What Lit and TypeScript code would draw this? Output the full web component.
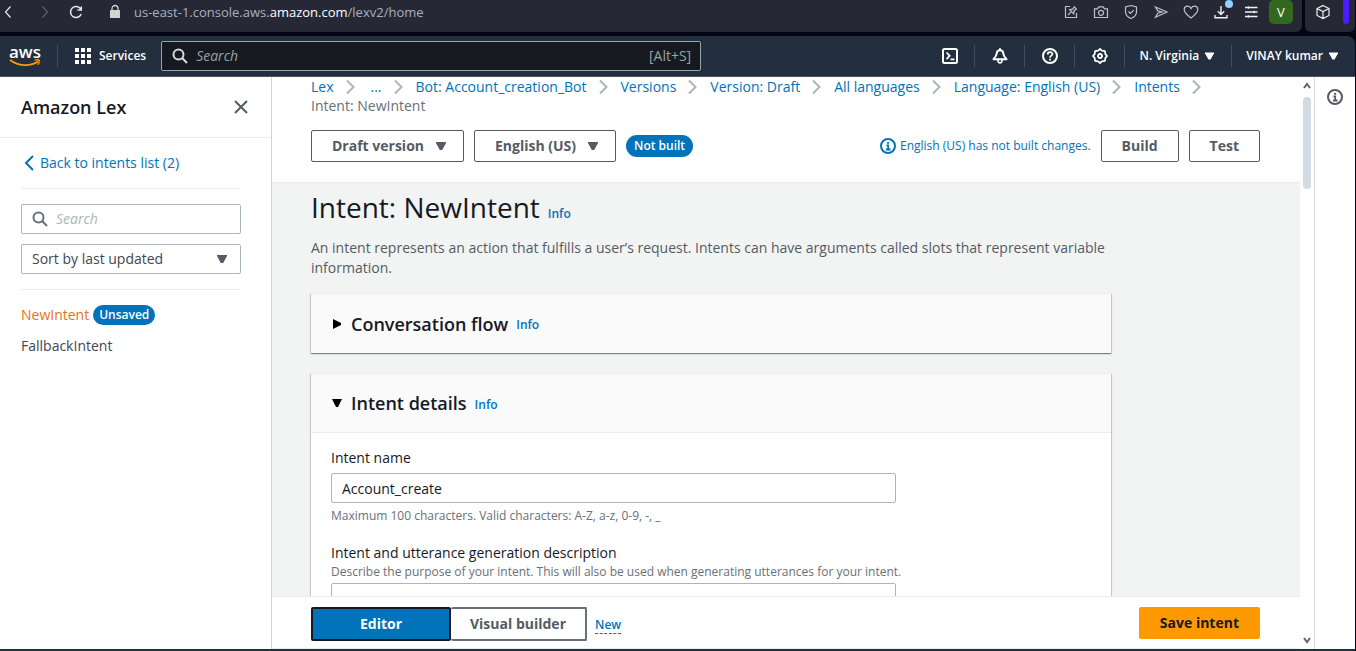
import { LitElement, html, css, svg } from "lit";
import { customElement, state } from "lit/decorators.js";

const infoIcon = svg`<svg viewBox="0 0 16 16" width="16" height="16" fill="none" stroke="currentColor" stroke-width="2" aria-hidden="true"><circle cx="8" cy="8" r="7"/><path d="M6 11.500h4.500M6.500 7.500H8.200V11.500M7 4.800h2.200" stroke-width="1.800"/></svg>`;
const chevron = svg`<svg viewBox="0 0 9 16" width="9" height="16" fill="none" stroke="#aab7b8" stroke-width="2" aria-hidden="true"><path d="M1 1.500 7.500 8 1 14.500"/></svg>`;
const searchIcon = svg`<svg viewBox="0 0 16 16" width="16" height="16" fill="none" stroke="currentColor" stroke-width="2" aria-hidden="true"><circle cx="6.500" cy="6.500" r="5"/><path d="m10.300 10.300 4.700 4.700"/></svg>`;
const caret = svg`<svg class="caret" viewBox="0 0 10 8" width="10" height="8" fill="currentColor" aria-hidden="true"><path d="M0 0h10v1L6.200 8H3.800L0 1z"/></svg>`;

@customElement("browser-bar")
class BrowserBar extends LitElement {
  static styles = css`
    :host { display: flex; height: 32px; gap: 3px; padding-right: 1px; background: #020512; font: 13px/24px "Open Sans", sans-serif; color: #e6e8ee; }
    .bar { flex: 1; display: flex; align-items: center; background: #262935; border-radius: 0 0 6px 0; padding-right: 9px; padding-bottom: 8px; }
    .side { display: flex; align-items: center; width: 50px; background: #262935; border-radius: 0 0 6px 6px; padding-bottom: 8px; box-sizing: border-box; }
    button { appearance: none; border: 0; background: none; padding: 0; color: inherit; font: inherit; display: grid; place-items: center; position: relative; }
    svg { display: block; fill: none; stroke: currentColor; }
    .nav { display: flex; gap: 18px; }
    .dim { color: #5b5f6b; }
    .lock { margin: 0 13px 0 25px; }
    .url { flex: 1; color: #a9b0c0; white-space: nowrap; }
    .url b { font-weight: 400; color: #fff; }
    .tools { display: flex; align-items: center; gap: 14px; color: #bfc1c7; }
    .bright { color: #f1f1f3; }
    .dot { position: absolute; top: -4px; right: -4px; width: 8px; height: 8px; border-radius: 50%; background: #8fd3ff; }
    .avatar { width: 24px; height: 24px; margin-left: -4px; border-radius: 5px; background: #33691e; color: #fff; font-size: 13px; }
    .cube { padding: 0 12px 0 10px; }
    .stripe { width: 6px; height: 24px; border-radius: 0 0 3px 3px; background: #4a1cff; }
  `;

  tool(label: string, body: unknown, cls = "", extra: unknown = "") {
    return html`<button class=${cls} aria-label=${label}><svg viewBox="0 0 16 16" width="16" height="16" stroke-width="1.2">${body}</svg>${extra}</button>`;
  }

  render() {
    return html`
      <div class="bar">
        <div class="nav">
          ${this.tool("Back", svg`<path d="M10.500 2.500 5.500 8l5 5.500"/>`)}
          ${this.tool("Forward", svg`<path d="m8.500 2.500 5 5.500-5 5.500"/>`, "dim")}
          ${this.tool("Reload", svg`<path d="M12.800 5.200A5.500 5.500 0 1 0 13.200 10M13.300 2.500V6H9.500" stroke-width="1.500"/>`)}
        </div>
        <svg class="lock" viewBox="0 0 12 16" width="12" height="16"><path d="M1.500 6h9Q11 6 11 6.500v7q0 .5-.5.5h-9q-.5 0-.5-.5v-7Q1 6 1.500 6z" fill="#d3d3d3" stroke="none"/><path d="M3 7V4.500a3 3 0 0 1 6 0V7" stroke="#d3d3d3" stroke-width="1.300"/></svg>
        <div class="url">us-east-1.console.aws.<b>amazon.com</b>/lexv2/home</div>
        <div class="tools">
          ${this.tool("Edit page", svg`<path d="M7 2.500H2.500v11h11V9M5 11 8.300 7.700M10.800 2.300l3 3M11.300 2.800 9.700 5.200 6.700 5.700l4 4 .5-3 2.300-1.600"/>`)}
          ${this.tool("Snapshot", svg`<path d="M1.500 4.800h3l1.300-2h4.400l1.300 2h3v8.700h-13z"/><circle cx="8" cy="8.800" r="2.500"/>`)}
          ${this.tool("Shield", svg`<path d="M8 1.500 13.500 3v5c0 3-2.500 5.300-5.500 6.500C5 13.300 2.500 11 2.500 8V3z"/><path d="m5.500 7.500 2 2 3.200-3.400"/>`)}
          ${this.tool("Send", svg`<path d="M2.500 3 14 8 2.500 13.200 4.800 9.200 9 8 4.800 6.900z"/>`)}
          ${this.tool("Favourite", svg`<path d="M8 14C4 11 1.200 8.500 1.200 5.500c0-4 5.300-4.500 6.800-1 1.500-3.500 6.800-3 6.800 1C14.800 8.500 12 11 8 14z"/>`)}
          ${this.tool("Downloads", svg`<path d="M8 2v8.500M4.800 7.300 8 10.500l3.200-3.200M2 11v2.700h12V11" stroke-width="1.400"/>`, "bright", html`<span class="dot"></span>`)}
          ${this.tool("Easy setup", svg`<path d="M2 3.500h12.500M2 8h12.500M2 12.500h12.500M5.500 2.300v2.400M11 6.800v2.400M5.500 11.300v2.400" stroke-width="1.300"/>`, "bright")}
          <button class="avatar" aria-label="Profile">V</button>
        </div>
      </div>
      <div class="side">
        <div class="cube bright">${this.tool("Extensions", svg`<path d="M8 1.500 14 4.500v7L8 14.500 2 11.500v-7zM2 4.500l6 3 6-3M8 7.500v7"/>`)}</div>
        <div class="stripe"></div>
      </div>`;
  }
}

@customElement("console-header")
class ConsoleHeader extends LitElement {
  static styles = css`
    :host { display: flex; align-items: center; height: 40px; background: #232f3e; border-bottom: 1px solid #4a5562; border-radius: 0 8px 0 0; color: #fff; font: 600 12px/20px "Open Sans", sans-serif; }
    button { appearance: none; border: 0; background: none; padding: 0; color: inherit; font: inherit; display: flex; align-items: center; white-space: nowrap; }
    .logo { display: flex; flex-direction: column; align-items: center; width: 32px; margin: 0 16px 0 9px; color: #fff; text-decoration: none; font-size: 17px; line-height: 14px; }
    .logo svg { display: block; }
    .rule { width: 1px; height: 22px; background: #414d5c; }
    .services { gap: 8px; margin: 0 15px 0 17px; }
    .search { display: flex; align-items: center; flex: 0 1 540px; height: 30px; box-sizing: border-box; border: 1px solid #95a5a6; border-radius: 2px; background: #16191f; padding: 0 9px 0 10px; gap: 8px; font-weight: 400; font-size: 14px; color: #d5dbdb; }
    .search input { flex: 1; min-width: 0; border: 0; background: none; outline: none; color: #fff; font: inherit; padding: 0; }
    .search input::placeholder { color: #95a5a6; font-style: italic; }
    .search kbd { font: inherit; color: #95a5a6; }
    .right { margin-left: auto; display: flex; align-items: center; }
    .icon { width: 49px; height: 30px; justify-content: center; }
    .menu { gap: 6px; padding: 0 17px 0 14px; }
    .menu svg { width: 9px; }
  `;

  render() {
    return html`
      <a class="logo" href="#" aria-label="AWS home">aws
        <svg viewBox="0 0 32 8" width="32" height="8" fill="none" stroke="#ff9900" stroke-width="1.800"><path d="M1 1c8 6 20 7 28 1.500"/><path d="M25.500 1.200c3-.8 5-.5 4.700.3.2 1-.2 2.800-1.500 4.300" stroke-width="1.300"/></svg>
      </a>
      <span class="rule"></span>
      <button class="services">
        <svg viewBox="0 0 16 16" width="16" height="16" fill="#fff"><path d="M0 0h4v4H0zM6 0h4v4H6zM12 0h4v4h-4zM0 6h4v4H0zM6 6h4v4H6zM12 6h4v4h-4zM0 12h4v4H0zM6 12h4v4H6zM12 12h4v4h-4z"/></svg>
        Services
      </button>
      <label class="search">${searchIcon}<input type="search" placeholder="Search" aria-label="Search services" /><kbd>[Alt+S]</kbd></label>
      <div class="right">
        <button class="icon" aria-label="CloudShell"><svg viewBox="0 0 16 16" width="16" height="16" fill="none" stroke="#fff" stroke-width="2"><rect x="1" y="1" width="14" height="14" rx="1.500"/><path d="m4.500 4.500 3.200 3.300-3.200 3.400M8.500 11.300h4" stroke-width="1.700"/></svg></button>
        <span class="rule"></span>
        <button class="icon" aria-label="Notifications"><svg viewBox="0 0 16 16" width="16" height="16" fill="none" stroke="#fff" stroke-width="2" stroke-linejoin="round"><path d="M8 2.200C6 2.200 4.900 3.500 4.700 5.500 4.500 8 3.500 9 1.500 11.200h13C12.500 9 11.500 8 11.300 5.500 11.100 3.500 10 2.200 8 2.200zM8 .300v2"/><path d="M6 12c0 4 4 4 4 0" stroke-width="1.600"/></svg></button>
        <span class="rule"></span>
        <button class="icon" aria-label="Help"><svg viewBox="0 0 16 16" width="16" height="16" fill="none" stroke="#fff" stroke-width="2"><circle cx="8" cy="8" r="7"/><path d="M5.700 6.500C5.700 3.300 10.400 3.500 10.400 6 10.400 7.800 8 7.600 8 9.700M8 10.800v1.800" stroke-width="1.700"/></svg></button>
        <span class="rule"></span>
        <button class="icon" aria-label="Settings"><svg viewBox="0 0 16 16" width="16" height="16" fill="none" stroke="#fff" stroke-width="1.800" stroke-linejoin="round"><path d="M8 1 9.900 2.600 12.900 3.100 13.400 6.100 15 8 13.400 9.900 12.900 12.900 9.900 13.400 8 15 6.100 13.400 3.100 12.900 2.600 9.900 1 8 2.600 6.100 3.100 3.100 6.100 2.600z"/><circle cx="8" cy="8" r="2"/></svg></button>
        <span class="rule"></span>
        <button class="menu">N. Virginia ${caret}</button>
        <span class="rule"></span>
        <button class="menu">VINAY kumar ${caret}</button>
      </div>`;
  }
}

@customElement("intent-nav")
class IntentNav extends LitElement {
  static styles = css`
    :host { display: block; flex: none; width: 271px; background: #fff; border-right: 1px solid #cfd5d6; font: 14px/20px "Open Sans", sans-serif; color: #414750; }
    header { display: flex; align-items: center; justify-content: space-between; height: 60px; padding: 0 23px 0 21px; border-bottom: 1px solid #eaeded; }
    h2 { margin: 0; font-size: 18px; line-height: 22px; font-weight: 600; color: #16191f; }
    .close { appearance: none; border: 0; background: none; padding: 0; color: #545b64; display: grid; }
    .body { padding: 15px 30px 0 21px; }
    .back { display: flex; align-items: center; gap: 6px; padding-left: 3px; color: #0073bb; text-decoration: none; }
    hr { border: 0; border-top: 1px solid #eaeded; margin: 15px 0; }
    .field { display: flex; align-items: center; gap: 8px; height: 30px; box-sizing: border-box; border: 1px solid #aab7b8; border-radius: 2px; padding: 0 10px; color: #687078; }
    .field input { flex: 1; min-width: 0; border: 0; outline: none; padding: 0; background: none; font: inherit; color: #16191f; }
    .field input::placeholder { color: #aab7b8; font-style: italic; }
    .field select { flex: 1; appearance: none; border: 0; outline: none; padding: 0; background: none; font: inherit; color: #414750; }
    .sort { margin-top: 10px; padding-right: 13px; color: #545b64; }
    ul { list-style: none; margin: 0; padding: 0; display: grid; gap: 11px; }
    li { display: flex; align-items: center; gap: 4px; }
    li a { color: inherit; text-decoration: none; }
    li a.current { color: #ec7211; }
    .badge { background: #0073bb; color: #fff; border-radius: 10px; font-size: 12px; font-weight: 600; padding: 0 6px; }
  `;

  render() {
    return html`
      <header>
        <h2>Amazon Lex</h2>
        <button class="close" aria-label="Close navigation"><svg viewBox="0 0 14 14" width="14" height="14" fill="none" stroke="currentColor" stroke-width="2"><path d="m1 1 12 12M13 1 1 13"/></svg></button>
      </header>
      <div class="body">
        <a class="back" href="#"><svg viewBox="0 0 10 16" width="10" height="16" fill="none" stroke="currentColor" stroke-width="2"><path d="M9 1 2 8l7 7"/></svg>Back to intents list (2)</a>
        <hr />
        <label class="field">${searchIcon}<input type="search" placeholder="Search" aria-label="Search intents" /></label>
        <label class="field sort"><select aria-label="Sort intents"><option>Sort by last updated</option></select>${caret}</label>
        <hr />
        <ul>
          <li><a class="current" href="#">NewIntent</a><span class="badge">Unsaved</span></li>
          <li><a href="#">FallbackIntent</a></li>
        </ul>
      </div>`;
  }
}

@customElement("intent-editor")
class IntentEditor extends LitElement {
  @state() private view = "editor";

  static styles = css`
    :host { display: flex; flex-direction: column; flex: 1; min-width: 0; background: #fff; font: 14px/20px "Open Sans", sans-serif; color: #16191f; }
    a { color: #0073bb; text-decoration: none; }
    .scroll { flex: 1; min-height: 0; overflow: hidden; background: #f2f3f3; }
    .top { background: #fff; padding: 0 40px 20px 39px; border-bottom: 1px solid #eaeded; }
    .crumbs { display: flex; flex-wrap: wrap; margin: 0; padding: 0; list-style: none; color: #687078; line-height: 19px; }
    .crumbs li { display: flex; align-items: center; gap: 12px; padding-right: 13px; }
    .crumbs .more { padding-left: 3px; }
    .actions { display: flex; align-items: center; gap: 10px; margin-top: 15px; }
    .btn, .pick select { appearance: none; box-sizing: border-box; height: 32px; border: 1px solid #545b64; border-radius: 2px; background: #fff; color: #545b64; font: 700 14px/20px "Open Sans", sans-serif; padding: 0 20px; }
    .pick { display: grid; align-items: center; color: #545b64; }
    .pick > * { grid-area: 1 / 1; }
    .pick select { padding-right: 38px; }
    .pick svg { justify-self: end; margin-right: 18px; pointer-events: none; }
    .badge { background: #0073bb; color: #fff; border-radius: 11px; font-size: 12px; font-weight: 600; line-height: 22px; padding: 0 8px; }
    .note { display: flex; align-items: center; gap: 4px; margin-left: auto; color: #0073bb; font-size: 12px; }
    .page { padding: 4px 40px 20px 39px; }
    .column { max-width: 800px; }
    h1 { margin: 0; font-size: 28px; line-height: 40px; font-weight: 400; }
    .info { font-size: 12px; line-height: 16px; font-weight: 600; margin-left: 8px; }
    .lead { margin: 11px 0 15px; color: #545b64; }
    .card { background: #fff; border-top: 1px solid #eaeded; margin-bottom: 20px; box-shadow: 0 1px 1px 0 rgba(0, 28, 36, 0.3), 1px 1px 1px 0 rgba(0, 28, 36, 0.15), -1px 1px 1px 0 rgba(0, 28, 36, 0.15); }
    .head { display: flex; align-items: center; height: 59px; padding: 0 20px; background: #fafafa; }
    .open .head { border-bottom: 1px solid #eaeded; height: 58px; }
    .toggle { appearance: none; border: 0; background: none; padding: 0; display: flex; align-items: center; gap: 8px; font: 600 18px/22px "Open Sans", sans-serif; color: #16191f; }
    .toggle svg { width: 12px; }
    .head .info { margin-top: 3px; }
    .fields { padding: 15px 20px 40px; display: grid; gap: 18px; }
    .field { display: grid; }
    .hint { font-size: 12px; line-height: 18px; color: #687078; }
    .field input, .field textarea { box-sizing: border-box; width: 100%; max-width: 565px; border: 1px solid #aab7b8; border-radius: 2px; padding: 4px 10px; font: inherit; color: #16191f; outline: none; background: #fff; resize: none; }
    .field input { height: 30px; margin: 5px 0 4px; }
    .field textarea { height: 72px; margin: 2px 0; }
    footer { display: flex; align-items: center; gap: 8px; border-top: 1px solid #eaeded; border-bottom: 1px solid #eaeded; padding: 10px 40px 7px 39px; }
    .segments { display: flex; }
    .segments .btn { height: 34px; border: 2px solid #687078; border-left-width: 0; padding: 0 19px; }
    .segments .btn.on { background: #0073bb; color: #fff; border: 2px solid #16191f; min-width: 140px; }
    .new { font-size: 12px; line-height: 16px; font-weight: 600; border-bottom: 1px dashed #0073bb; margin-top: 3px; }
    .btn.save { margin-left: auto; align-self: flex-start; background: #ff9900; border-color: #ff9900; color: #16191f; }
  `;

  render() {
    const crumbs = ["Lex", "...", "Bot: Account_creation_Bot", "Versions", "Version: Draft", "All languages", "Language: English (US)", "Intents"];
    return html`
      <div class="scroll">
        <div class="top">
          <ol class="crumbs">
            ${crumbs.map((c) => html`<li><a class=${c === "..." ? "more" : ""} href="#">${c}</a>${chevron}</li>`)}
            <li>Intent: NewIntent</li>
          </ol>
          <div class="actions">
            <label class="pick"><select aria-label="Version"><option>Draft version</option></select>${caret}</label>
            <label class="pick"><select aria-label="Language"><option>English (US)</option></select>${caret}</label>
            <span class="badge">Not built</span>
            <span class="note">${infoIcon}English (US) has not built changes.</span>
            <button class="btn">Build</button>
            <button class="btn">Test</button>
          </div>
        </div>
        <div class="page">
          <div class="column">
            <h1>Intent: NewIntent<a class="info" href="#">Info</a></h1>
            <p class="lead">An intent represents an action that fulfills a user’s request. Intents can have arguments called slots that represent variable information.</p>
            <section class="card">
              <div class="head">
                <button class="toggle" aria-expanded="false"><svg viewBox="0 0 12 10" height="10"><path d="M2 0 10 4v2L2 10z"/></svg>Conversation flow</button>
                <a class="info" href="#">Info</a>
              </div>
            </section>
            <section class="card open">
              <div class="head">
                <button class="toggle" aria-expanded="true"><svg viewBox="0 0 12 10" height="10"><path d="M1 1h10L7 9H5z"/></svg>Intent details</button>
                <a class="info" href="#">Info</a>
              </div>
              <div class="fields">
                <div class="field">
                  <label for="name">Intent name</label>
                  <input id="name" type="text" value="Account_create" />
                  <span class="hint">Maximum 100 characters. Valid characters: A-Z, a-z, 0-9, -, _</span>
                </div>
                <div class="field">
                  <label for="desc">Intent and utterance generation description</label>
                  <span class="hint">Describe the purpose of your intent. This will also be used when generating utterances for your intent.</span>
                  <textarea id="desc"></textarea>
                </div>
              </div>
            </section>
          </div>
        </div>
      </div>
      <footer>
        <div class="segments">
          <button class="btn ${this.view === "editor" ? "on" : ""}" @click=${() => (this.view = "editor")}>Editor</button>
          <button class="btn ${this.view === "visual" ? "on" : ""}" @click=${() => (this.view = "visual")}>Visual builder</button>
        </div>
        <a class="new" href="#">New</a>
        <button class="btn save">Save intent</button>
      </footer>`;
  }
}

@customElement("app-root")
class AppRoot extends LitElement {
  static styles = css`
    :host { display: flex; flex-direction: column; gap: 4px; height: 100vh; overflow: hidden; background: #020512; }
    .console { flex: 1; min-height: 0; display: flex; flex-direction: column; margin-right: 1px; border-bottom: 2px solid #232f3e; }
    .work { flex: 1; min-height: 0; display: flex; background: #fff; }
    .track { display: flex; flex-direction: column; align-items: center; width: 15px; box-sizing: border-box; padding: 5px 0; border-right: 1px solid #d5dbdb; color: #606468; }
    .thumb { width: 8px; height: 92px; margin: 8px 0 auto; border-radius: 4px; background: #d0dbe3; }
    .tools { width: 40px; padding-top: 12px; display: flex; justify-content: center; align-items: flex-start; }
    .tools button { appearance: none; border: 0; background: none; padding: 0; color: #545b64; display: grid; }
  `;

  render() {
    return html`
      <browser-bar></browser-bar>
      <div class="console">
        <console-header></console-header>
        <div class="work">
          <intent-nav></intent-nav>
          <intent-editor></intent-editor>
          <div class="track" aria-hidden="true">
            <svg viewBox="0 0 8 7" width="8" height="7" fill="none" stroke="currentColor" stroke-width="2"><path d="m1 6 3-4 3 4"/></svg>
            <div class="thumb"></div>
            <svg viewBox="0 0 8 7" width="8" height="7" fill="none" stroke="currentColor" stroke-width="2"><path d="m1 1 3 4 3-4"/></svg>
          </div>
          <div class="tools"><button aria-label="Info panel">${infoIcon}</button></div>
        </div>
      </div>`;
  }
}
